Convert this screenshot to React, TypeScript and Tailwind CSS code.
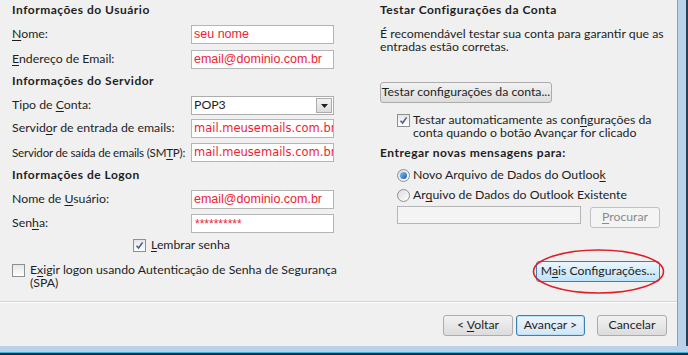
import React from 'react'

const ui = { fontFamily: "Lato, 'Open Sans', 'Noto Sans', sans-serif" }
const arial = { fontFamily: "'Liberation Sans', Arial, sans-serif" }
const verdana = { fontFamily: "'DejaVu Sans', Verdana, sans-serif" }

function U({ children }: { children: React.ReactNode }) {
  return <span className="underline underline-offset-2">{children}</span>
}

function Field({ label, value, wide, tight }: { label: React.ReactNode; value: string; wide?: boolean; tight?: boolean }) {
  return (
    <div className="flex h-[19px] items-center">
      <div className={`w-[179px] whitespace-nowrap text-[#1e1e1e] ${tight ? 'text-[11.6px] tracking-[-0.2px]' : 'text-[12.3px]'}`}>{label}</div>
      <div className="flex h-[19px] w-[143px] items-center overflow-hidden whitespace-nowrap border border-[#b5b5b5] bg-white pl-[2px]">
        <span style={wide ? verdana : arial} className={wide ? 'text-[11.5px] text-[#ec2434]' : 'text-[12.5px] text-[#ec2434]'}>
          {value}
        </span>
      </div>
    </div>
  )
}

function Check({ checked }: { checked?: boolean }) {
  return (
    <div className="flex h-[13px] w-[13px] shrink-0 items-center justify-center border border-[#8e8f8f] bg-gradient-to-b from-[#e6e6e6] to-[#ffffff]">
      {checked && (
        <svg width="9" height="9" viewBox="0 0 9 9">
          <path d="M1.5 4.8 L3.6 7 L7.6 1.4" fill="none" stroke="#4a5f97" strokeWidth="1.6" />
        </svg>
      )}
    </div>
  )
}

function Radio({ on }: { on?: boolean }) {
  return (
    <div className="flex h-[13px] w-[13px] shrink-0 items-center justify-center rounded-full border border-[#8e8f8f] bg-gradient-to-br from-[#dcdcdc] to-[#ffffff]">
      {on && <div className="h-[7px] w-[7px] rounded-full bg-gradient-to-br from-[#7ec4f5] to-[#1a5fa8]" />}
    </div>
  )
}

function Btn({ children, w, primary, disabled, hot }: { children: React.ReactNode; w: string; primary?: boolean; disabled?: boolean; hot?: boolean }) {
  const base = 'flex h-[21px] items-center justify-center whitespace-pre rounded-[3px] border text-[12.3px]'
  let look = 'border-[#acacac] bg-gradient-to-b from-[#f2f2f2] to-[#dcdcdc] text-[#1e1e1e]'
  if (primary) look = 'border-[#3c7fb1] bg-gradient-to-b from-[#eef5fb] to-[#d3e6f5] text-[#1e1e1e] shadow-[inset_0_0_0_1px_#b7e1f8]'
  if (hot) look = 'border-[#3c7fb1] bg-gradient-to-b from-[#eaf6fd] to-[#bfe3f9] text-[#1e1e1e]'
  if (disabled) look = 'border-[#c0c0c0] bg-[#f4f4f4] text-[#8a8a8a]'
  return (
    <div className={`${base} ${look} ${w}`}>
      <span>{children}</span>
    </div>
  )
}

function Heading({ children, className = '' }: { children: React.ReactNode; className?: string }) {
  return <div className={`h-[16px] whitespace-nowrap text-[12px] font-bold leading-[16px] tracking-[0.5px] ${className}`}>{children}</div>
}

export default function App() {
  return (
    <div style={ui} className="flex h-[355px] w-[688px] flex-col bg-[#0e2a3a]">
      <div className="flex h-[346px]">
        <div className="relative flex w-[677px] flex-col bg-[#f0f0f0] text-[#1e1e1e]">
          <div className="flex h-[301px]">
            {/* left column */}
            <div className="flex w-[380px] flex-col pl-[12px] pt-[2px]">
              <Heading>Informações do Usuário</Heading>
              <div className="mt-[7px]"><Field label={<><U>N</U>ome:</>} value="seu nome" /></div>
              <div className="mt-[6px]"><Field label={<><U>E</U>ndereço de Email:</>} value="email@dominio.com.br" /></div>
              <Heading className="mt-[4px]">Informações do Servidor</Heading>
              <div className="mt-[7px] flex h-[19px] items-center">
                <div className="w-[179px] text-[12.3px]">Tipo de <U>C</U>onta:</div>
                <div className="flex h-[19px] w-[143px] items-center justify-between border border-[#adadad] bg-white pl-[2px] pr-[1px]">
                  <span className="text-[12.3px] text-[#1e1e1e]">POP3</span>
                  <div className="flex h-[15px] w-[16px] items-center justify-center border border-[#acacac] bg-gradient-to-b from-[#f2f2f2] to-[#dcdcdc]">
                    <svg width="7" height="4" viewBox="0 0 7 4"><path d="M0 0 H7 L3.5 4 Z" fill="#1e1e1e" /></svg>
                  </div>
                </div>
              </div>
              <div className="mt-[4px]"><Field label={<>Servid<U>o</U>r de entrada de emails:</>} value="mail.meusemails.com.br" wide /></div>
              <div className="mt-[5px]"><Field label={<>Servidor de saída de emails (SM<U>T</U>P):</>} value="mail.meusemails.com.br" wide tight /></div>
              <Heading className="mt-[5px]">Informações de Logon</Heading>
              <div className="mt-[7px]"><Field label={<>Nome de <U>U</U>suário:</>} value="email@dominio.com.br" /></div>
              <div className="mt-[5px] flex h-[19px] items-center">
                <div className="w-[179px] text-[12.3px]">Sen<U>h</U>a:</div>
                <div className="flex h-[19px] w-[143px] items-center border border-[#b5b5b5] bg-white pl-[3px]">
                  <span style={arial} className="text-[12px] text-[#ec2434]">**********</span>
                </div>
              </div>
              <div className="mt-[4px] flex h-[16px] items-center gap-[5px] pl-[121px]">
                <Check checked />
                <span className="text-[12.3px]"><U>L</U>embrar senha</span>
              </div>
              <div className="mt-[10px] flex gap-[5px]">
                <div className="pt-[1px]"><Check /></div>
                <div className="text-[12.3px] leading-[13px]">
                  E<U>x</U>igir logon usando Autenticação de Senha de Segurança<br />(SPA)
                </div>
              </div>
            </div>
            {/* right column */}
            <div className="flex w-[280px] flex-col pt-[2px]">
              <Heading>Testar Configurações da Conta</Heading>
              <div className="mt-[9px] whitespace-nowrap text-[12.3px] leading-[13px]">
                É recomendável testar sua conta para garantir que as<br />entradas estão corretas.
              </div>
              <div className="mt-[29px]">
                <Btn w="w-[172px]">Testar configurações da conta...</Btn>
              </div>
              <div className="mt-[10px] flex gap-[3px] pl-[17px]">
                <div className="pt-[1px]"><Check checked /></div>
                <div className="whitespace-nowrap text-[12.3px] leading-[13px]">
                  Testar automaticamente as con<U>f</U>igurações da<br />conta quando o botão Avançar for clicado
                </div>
              </div>
              <Heading className="mt-[6px]">Entregar novas mensagens para:</Heading>
              <div className="mt-[6px] flex h-[16px] items-center gap-[3px] pl-[17px]">
                <Radio on />
                <span className="text-[12.3px]">Novo Arquivo de Dados do Outloo<U>k</U></span>
              </div>
              <div className="mt-[4px] flex h-[16px] items-center gap-[3px] pl-[17px]">
                <Radio />
                <span className="text-[12.3px]">Ar<U>q</U>uivo de Dados do Outlook Existente</span>
              </div>
              <div className="mt-[3px] flex items-start justify-between pl-[17px]">
                <div className="h-[18px] w-[184px] border border-[#b5b5b5] bg-[#f4f4f4]" />
                <div className="mt-[1px]"><Btn w="w-[70px]" disabled><U>P</U>rocurar</Btn></div>
              </div>
              <div className="mt-[33px] flex justify-end">
                <Btn w="w-[124px]" hot>M<U>a</U>is Configurações...</Btn>
              </div>
            </div>
          </div>
          <div className="h-px w-full bg-[#d5d5d5]" />
          <div className="h-px w-full bg-white" />
          <div className="flex justify-end pr-[10px] pt-[12px]">
            <Btn w="w-[70px]">{'< '}<U>V</U>oltar</Btn>
            <div className="ml-[3px]"><Btn w="w-[69px]" primary>Avançar &gt;</Btn></div>
            <div className="ml-[12px]"><Btn w="w-[70px]">Cancelar</Btn></div>
          </div>
          <svg className="pointer-events-none absolute left-[530px] top-[247px]" width="138" height="50" viewBox="0 0 138 50">
            <ellipse cx="68.5" cy="24.5" rx="65" ry="21.5" fill="none" stroke="#e21b24" strokeWidth="1.6" />
          </svg>
        </div>
        <div className="w-px bg-[#8aa0b8]" />
        <div className="w-[8px] bg-[#b9d1ea]" />
        <div className="w-[2px] bg-[#2a3f55]" />
      </div>
      <div className="h-[6px] bg-[#b9d1ea]" />
      <div className="h-px bg-[#3ab4dc]" />
      <div className="flex-1 bg-[#0e2a3a]" />
    </div>
  )
}
